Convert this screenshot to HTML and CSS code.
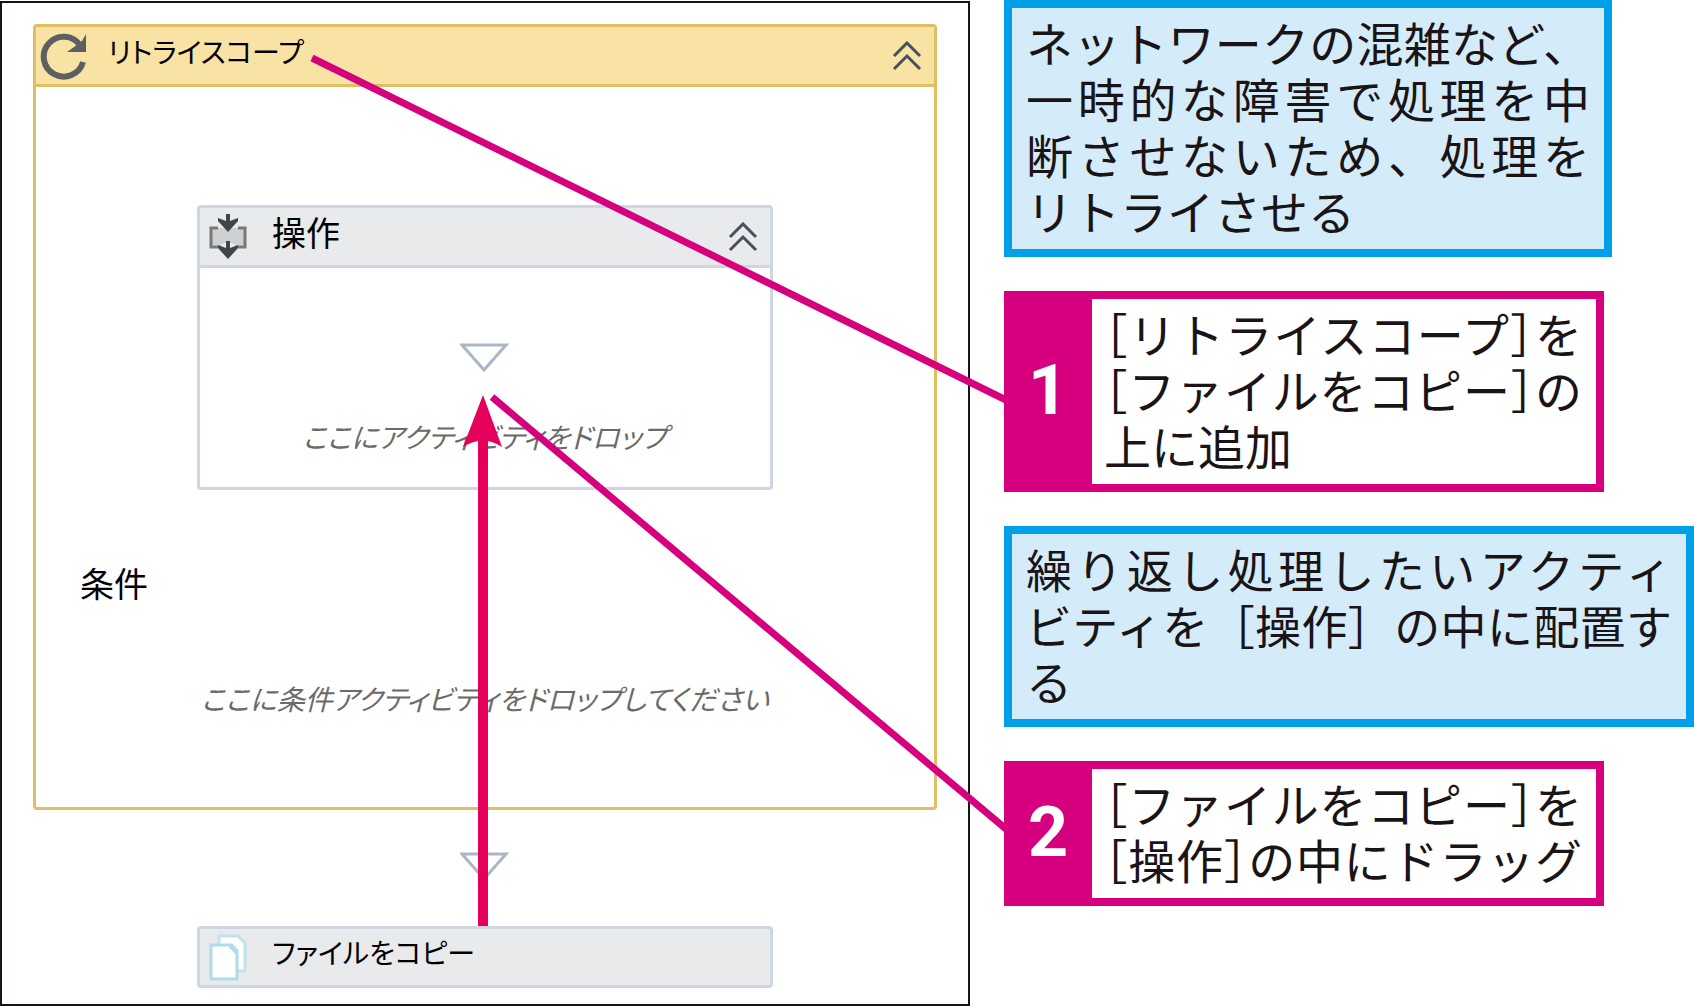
FILE: index.html
```
<!DOCTYPE html>
<html lang="ja">
	<head>
		<meta charset="UTF-8" />
		<meta name="viewport" content="width=device-width, initial-scale=1.0" />
		<title>リトライスコープ</title>
		<link rel="stylesheet" href="styles.css">
	</head>
	<body>
		<main class="page">
			<section class="workflow">
				<div class="activity scope">
					<div class="activity-header">
						<svg class="icon-retry" width="48" height="48" viewBox="0 0 48 48">
							<path d="M40 13A20 20 0 1 0 43 30" fill="none" stroke="#5e5f61" stroke-width="6" />
							<path d="M46 2V20H27L34 15L42 9Z" fill="#5e5f61" />
						</svg>
						<h2 class="title">リトライスコープ</h2>
						<button class="collapse" type="button" aria-label="折りたたむ">
							<svg width="30" height="30" viewBox="0 0 30 30">
								<path d="M2 15L15 2L28 15M2 28L15 15L28 28" />
							</svg>
						</button>
					</div>
					<div class="scope-body">
						<div class="activity sequence">
							<div class="activity-header">
								<svg class="icon" width="40" height="48" viewBox="0 0 40 48">
									<path d="M4 15H36V34H30L20 28L10 34H4Z" fill="#cfd0d1" />
									<path d="M10 15H3V34H10M30 15H37V34H30" fill="none" stroke="#77797b" stroke-width="3" />
									<path d="M18 1H22V8L30 5V8L20 19L10 8V5L18 8Z" fill="#3f4549" />
									<path d="M18 28H22V35L30 32V35L20 46L10 35V32L18 35Z" fill="#3f4549" />
								</svg>
								<h3 class="title kanji">操作</h3>
								<button class="collapse" type="button" aria-label="折りたたむ">
									<svg width="30" height="30" viewBox="0 0 30 30">
										<path d="M2 15L15 2L28 15M2 28L15 15L28 28" />
									</svg>
								</button>
							</div>
							<div class="sequence-body">
								<svg class="drop-mark" width="50" height="30" viewBox="0 0 50 30">
									<path d="M2 3H46L24 28Z" />
								</svg>
								<p class="hint">ここにアクティビティをドロップ</p>
							</div>
						</div>
						<p class="title kanji condition">条件</p>
						<p class="hint">ここに条件アクティビティをドロップしてください</p>
					</div>
				</div>
				<svg class="drop-mark between" width="50" height="30" viewBox="0 0 50 30">
					<path d="M2 3H46L24 28Z" />
				</svg>
				<div class="activity copy">
					<div class="activity-header">
						<svg class="icon" width="40" height="48" viewBox="0 0 40 48">
							<path d="M11 3H30L37 10V38H11Z" fill="#fff" stroke="#bfe3ee" stroke-width="3" />
							<path d="M3 12H22L29 19V46H3Z" fill="#fff" stroke="#b0dce9" stroke-width="3" />
							<path d="M22 12L29 19" fill="none" stroke="#b0dce9" stroke-width="5" />
						</svg>
						<h2 class="title">ファイルをコピー</h2>
					</div>
				</div>
			</section>

			<section class="guide">
				<p class="note note-retry">
					<span class="fill">ネットワークの混雑など、</span>
					<span class="fill">一時的な障害で処理を中</span>
					<span class="fill">断させないため、処理を</span>
					<span class="line">リトライさせる</span>
				</p>
				<div class="step">
					<span class="number">1</span>
					<p class="step-text">
						<span class="fill">［リトライスコープ］を</span>
						<span class="fill">［ファイルをコピー］の</span>
						<span class="line">上に追加</span>
					</p>
				</div>
				<p class="note note-wide">
					<span class="fill">繰り返し処理したいアクティ</span>
					<span class="fill">ビティを［操作］の中に配置す</span>
					<span class="line">る</span>
				</p>
				<div class="step">
					<span class="number">2</span>
					<p class="step-text">
						<span class="fill">［ファイルをコピー］を</span>
						<span class="fill">［操作］の中にドラッグ</span>
					</p>
				</div>
			</section>

			<!-- leader lines and the drag arrow -->
			<svg class="leaders" viewBox="0 0 1694 1006">
				<path d="M483 926V436" stroke="#e5005b" stroke-width="10" />
				<path d="M483 395L502 447Q483 434 463 447Z" fill="#e5005b" />
				<path d="M312 58L1006 400M492 397L1006 829" stroke="#d6007f" stroke-width="7" />
			</svg>
		</main>
	</body>
</html>
```
FILE: styles.css
```
* {
	box-sizing: border-box;
}
body {
	margin: 0;
	background: #fff;
	font-family: "Noto Sans CJK JP", sans-serif;
	color: #1a1416;
}
h2,
h3,
p {
	margin: 0;
	font-weight: 400;
}
svg {
	display: block;
	flex: none;
}
.page {
	position: relative;
	display: grid;
	grid-template-columns: 970fr 690fr;
	column-gap: 34px;
	align-items: start;
}

/* workflow panel */
.workflow {
	display: flex;
	flex-direction: column;
	align-items: center;
	margin-top: 1px;
	padding: 21px 31px 16px;
	border: 2px solid #1a1416;
}
.activity {
	border: 3px solid #cfd6e3;
	border-radius: 4px;
	background: #fff;
}
.activity-header {
	display: flex;
	align-items: center;
	gap: 24px;
	height: 60px;
	padding: 0 12px 0 8px;
	border-bottom: 3px solid #cfd6e3;
	background: #e8eaec;
}
.scope {
	width: 100%;
	border-color: #e0bf63;
}
.scope > .activity-header {
	gap: 20px;
	padding-left: 4px;
	border-color: #e0bf63;
	background: #f9e3a4;
}
.scope-body {
	display: flex;
	flex-direction: column;
	align-items: center;
	padding: 118px 44px 89px;
}
.sequence,
.copy {
	width: 576px;
	max-width: 100%;
}
.sequence-body {
	display: flex;
	flex-direction: column;
	align-items: center;
	gap: 44px;
	padding: 74px 0 31px;
}
.copy .activity-header {
	height: 56px;
	border-bottom: 0;
}
.title {
	padding-bottom: 10px;
	font-size: 28px;
	line-height: 40px;
	color: #000;
	font-feature-settings: "palt";
}
.kanji {
	font-size: 34px;
}
.condition {
	align-self: flex-start;
	margin: 73px 0 65px;
}
.hint {
	font-size: 28px;
	font-style: italic;
	line-height: 40px;
	white-space: nowrap;
	color: #6a6a6a;
	font-feature-settings: "palt";
}
.collapse {
	margin-left: auto;
	padding: 0;
	border: 0;
	background: none;
}
.collapse path {
	fill: none;
	stroke: #46515b;
	stroke-width: 3;
}
.drop-mark path {
	fill: #fff;
	stroke: #aab6c5;
	stroke-width: 3;
}
.between {
	margin: 41px 0 45px;
}

/* guide column */
.guide {
	display: flex;
	flex-direction: column;
	gap: 34px;
	font-size: 47px;
	line-height: 56px;
}
.note {
	padding: 6px 14px 11px;
	border: 8px solid #00a0e9;
	background: #d4ecfa;
}
.note-retry {
	max-width: 608px;
}
.note-wide {
	font-size: 46px;
}
.fill,
.line {
	display: block;
	white-space: nowrap;
}
.fill {
	text-align: justify;
	text-align-last: justify;
}
.step {
	display: flex;
	max-width: 600px;
	border: 8px solid #d6007f;
	background: #d6007f;
}
.number {
	flex: none;
	align-self: center;
	width: 80px;
	padding: 0 8px 4px 0;
	font-family: Roboto, sans-serif;
	font-size: 70px;
	font-weight: 700;
	text-align: center;
	color: #fff;
}
.step-text {
	flex: 1;
	padding: 6px 14px 11px 12px;
	background: #fff;
	font-feature-settings: "halt";
}

.leaders {
	position: absolute;
	top: 0;
	left: 0;
	width: 100%;
	pointer-events: none;
}
```
